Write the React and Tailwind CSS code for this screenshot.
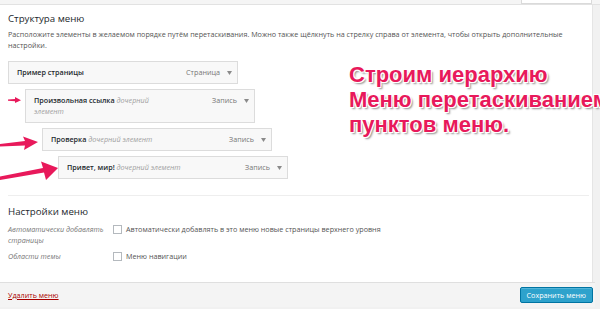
import React from "react";

const Caret = () => (
  <svg width="5" height="4" viewBox="0 0 5 4" className="shrink-0">
    <path d="M0 0 L5 0 L2.5 4 Z" fill="#8a8a8a" />
  </svg>
);

const MenuItem = ({ indent, title, sub, type, lines }) => (
  <div
    className="w-[230px] mt-[5px] first:mt-0 bg-[#f8f8f8] border border-[#dcdcdc] pl-[8px] pr-[5px] py-[5px] flex justify-between items-start leading-[11px]"
    style={{ marginLeft: indent }}
  >
    <div className="whitespace-nowrap">
      <span className="font-semibold text-[#23282d]">{title}</span>{" "}
      <span className="italic text-[#a0a0a0]">{sub}</span>
      {lines && (
        <>
          <br />
          <span className="italic text-[#a0a0a0]">{lines}</span>
        </>
      )}
    </div>
    <div className="flex items-center gap-[7px] h-[11px] text-[#777]">
      <span>{type}</span>
      <Caret />
    </div>
  </div>
);

export default function App() {
  return (
    <div className="relative w-[600px] h-[309px] overflow-hidden bg-[#f1f1f1] text-[7.2px] font-['Open_Sans',sans-serif] text-[#444]">
      <div className="h-[5px] bg-[#f5f5f5] border-b border-[#e2e2e2] flex justify-end pr-[8px]">
        <div className="w-[71px] h-[4px] bg-white border-x border-b border-[#dadada]" />
      </div>

      <div className="w-[593px] bg-white border-r border-[#e5e5e5] pl-[8px] pt-[7px] pb-[20px]">
        <h3 className="text-[9.7px] leading-[14px] text-[#23282d]">Структура меню</h3>
        <p className="mt-[3px] leading-[11px] text-[#555] whitespace-nowrap">
          Расположите элементы в желаемом порядке путём перетаскивания. Можно также щёлкнуть на стрелку справа от элемента, чтобы открыть дополнительные
          <br />
          настройки.
        </p>

        <div className="mt-[10px]">
          <MenuItem indent={0} title="Пример страницы" type="Страница" />
          <MenuItem indent={17} title="Произвольная ссылка" sub="дочерний" lines="элемент" type="Запись" />
          <MenuItem indent={34} title="Проверка" sub="дочерний элемент" type="Запись" />
          <MenuItem indent={50} title="Привет, мир!" sub="дочерний элемент" type="Запись" />
        </div>

        <div className="mt-[16px] mr-[3px] border-t border-[#eeeeee]" />

        <h3 className="mt-[9px] text-[9.7px] leading-[14px] text-[#23282d]">Настройки меню</h3>

        <div className="mt-[5px] grid grid-cols-[105px_1fr] gap-y-[5px] leading-[11px]">
          <div className="italic text-[#777]">
            Автоматически добавлять
            <br />
            страницы
          </div>
          <label className="flex items-start gap-[4px] text-[#555]">
            <span className="mt-[1px] w-[9px] h-[9px] bg-white border border-[#b4b9be] shrink-0" />
            Автоматически добавлять в это меню новые страницы верхнего уровня
          </label>
          <div className="italic text-[#777]">Области темы</div>
          <label className="flex items-start gap-[4px] text-[#555]">
            <span className="mt-[1px] w-[9px] h-[9px] bg-white border border-[#b4b9be] shrink-0" />
            Меню навигации
          </label>
        </div>
      </div>

      <div className="w-[595px] h-[25px] bg-[#f4f4f4] border-t border-[#dfdfdf] flex items-center justify-between pl-[8px] pr-[2px]">
        <a className="text-[#a00] underline">Удалить меню</a>
        <button className="h-[16px] px-[6px] bg-[#2ea2cc] border border-[#0074a2] rounded-[2px] text-white leading-[14px] shadow-[inset_0_1px_0_rgba(120,200,230,0.5)]">
          Сохранить меню
        </button>
      </div>

      <svg className="absolute left-0 top-0" width="60" height="190" viewBox="0 0 60 190">
        <polygon points="8,99.6 15,99 15,97 21,100.2 15,103 15,101.2 8,100.8" fill="#e8195b" />
        <polygon points="0,144 25,141 23,136.5 38,142 24,150 25,145.5 0,146.5" fill="#e8195b" />
        <polygon points="0,176.5 43,168 41,161.5 58,168 46,180 44,172.5 0,180" fill="#e8195b" />
      </svg>

      <div className="absolute left-[349px] top-[62px] whitespace-nowrap font-['Liberation_Sans',Arial,sans-serif] font-bold text-[22px] leading-[25px] text-[#e8195b] [text-shadow:-1px_-1px_0_#fff,1px_-1px_0_#fff,-1px_1px_0_#fff,1px_1px_0_#fff,2px_2px_2px_rgba(0,0,0,0.45)]">
        Строим иерархию
        <br />
        Меню перетаскиванием
        <br />
        пунктов меню.
      </div>
    </div>
  );
}
